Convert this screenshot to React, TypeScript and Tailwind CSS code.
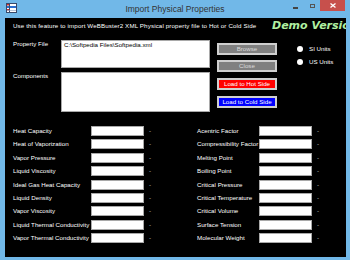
import React from "react";

const leftRows = [
  "Heat Capacity",
  "Heat of Vaporization",
  "Vapor Pressure",
  "Liquid Viscosity",
  "Ideal Gas Heat Capacity",
  "Liquid Density",
  "Vapor Viscosity",
  "Liquid Thermal Conductivity",
  "Vapor Thermal Conductivity",
];
const rightRows = [
  "Acentric Factor",
  "Compressibility Factor",
  "Melting Point",
  "Boiling Point",
  "Critical Pressure",
  "Critical Temperature",
  "Critical Volume",
  "Surface Tension",
  "Molecular Weight",
];

function PropRow({ label, labelW }: { label: string; labelW: string }) {
  return (
    <div className="flex h-[13.4px] items-start">
      <div className={`${labelW} shrink-0 leading-[10px] text-white whitespace-nowrap`}>{label}</div>
      <div className="w-[53px] h-[10px] shrink-0 bg-white border border-[#a9a9a9]" />
      <div className="ml-[5px] leading-[10px] text-[#d0d0d0]">-</div>
    </div>
  );
}

function Btn({ label, cls }: { label: string; cls: string }) {
  return (
    <div
      className={`w-[60px] h-[12px] border-2 border-[#cfcfcf] flex items-center justify-center leading-[8px] whitespace-nowrap ${cls}`}
    >
      {label}
    </div>
  );
}

export default function App() {
  return (
    <div
      className="w-[350px] h-[260px] bg-[#71b8e8] flex flex-col overflow-hidden"
      style={{ fontFamily: '"Liberation Sans", Arial, sans-serif' }}
    >
      {/* Title bar */}
      <div className="h-[18px] shrink-0 grid grid-cols-[1fr_auto_1fr]">
        <div className="pl-[6px] pt-[3px]">
          <svg width="11" height="10" viewBox="0 0 11 10">
            <rect x="0.5" y="0.5" width="10" height="9" fill="#ffffff" stroke="#3a4a6a" />
            <rect x="1" y="3" width="9" height="2" fill="#2d6fd0" />
            <line x1="3.5" y1="1" x2="3.5" y2="9" stroke="#3a4a6a" />
            <rect x="1" y="1" width="2" height="1.5" fill="#d03030" />
            <rect x="1" y="6" width="2" height="1.5" fill="#d03030" />
            <line x1="1" y1="7.5" x2="10" y2="7.5" stroke="#8aa0c0" strokeWidth="0.6" />
          </svg>
        </div>
        <div className="text-[8.5px] leading-[18px] text-[#333333] whitespace-nowrap">
          Import Physical Properties
        </div>
        <div className="flex justify-end items-start pr-[5px]">
          <div className="w-[17px] h-[11px] flex items-start justify-center pt-[7px]">
            <div className="w-[5px] h-[1.5px] bg-[#444]" />
          </div>
          <div className="w-[16px] h-[11px] flex items-start justify-center pt-[4px]">
            <div className="w-[5px] h-[4px] border border-[#555]" />
          </div>
          <div className="w-[25px] h-[11px] bg-[#c7504c] flex items-center justify-center">
            <svg width="6" height="5" viewBox="0 0 6 5">
              <line x1="0.5" y1="0.5" x2="5.5" y2="4.5" stroke="#fff" strokeWidth="1.3" />
              <line x1="5.5" y1="0.5" x2="0.5" y2="4.5" stroke="#fff" strokeWidth="1.3" />
            </svg>
          </div>
        </div>
      </div>

      {/* Client area */}
      <div className="ml-[5px] mr-[4px] h-[239px] shrink-0 bg-black overflow-hidden pl-[8px] pt-[3px] flex flex-col text-[6.2px]">
        {/* description row */}
        <div className="flex h-[10px] items-start">
          <div className="w-[259px] shrink-0 leading-[10px] text-white whitespace-nowrap tracking-[0.13px]">
            Use this feature to import WeBBuster2 XML Physical property file to Hot or Cold Side
          </div>
          <div
            className="shrink-0 -mt-[1px] whitespace-nowrap text-[11px] leading-[12px] font-bold italic text-[#b0f0a0]"
            style={{ fontFamily: '"DejaVu Sans", Verdana, sans-serif' }}
          >
            Demo Version
          </div>
        </div>

        {/* top form */}
        <div className="mt-[9px] flex items-start">
          <div className="w-[48px] shrink-0 flex flex-col text-white">
            <div className="h-[32px] leading-[8px] whitespace-nowrap">Property File</div>
            <div className="leading-[8px]">Components</div>
          </div>
          <div className="w-[149px] shrink-0 flex flex-col gap-[4px]">
            <div className="h-[28px] bg-white border border-[#a9a9a9] pl-[2px] leading-[8px] text-black whitespace-nowrap">
              C:\Softpedia Files\Softpedia.xml
            </div>
            <div className="h-[40px] bg-white border border-[#a9a9a9]" />
          </div>
          <div className="ml-[7px] shrink-0 pt-[3px] flex flex-col">
            <Btn label="Browse" cls="bg-[#808080] text-[#dcdcdc]" />
            <div className="mt-[5px]">
              <Btn label="Close" cls="bg-[#808080] text-[#dcdcdc]" />
            </div>
            <div className="mt-[6px]">
              <Btn label="Load to Hot Side" cls="bg-[#ff0000] text-white" />
            </div>
            <div className="mt-[6px]">
              <Btn label="Load to Cold Side" cls="bg-[#0000ff] text-white" />
            </div>
          </div>
          <div className="ml-[20px] shrink-0 pt-[5px] flex flex-col gap-[5px] text-white">
            <div className="flex items-center h-[8px] gap-[6px]">
              <div className="w-[6px] h-[6px] rounded-full bg-white" />
              <span className="leading-[8px] whitespace-nowrap">SI Units</span>
            </div>
            <div className="flex items-center h-[8px] gap-[6px]">
              <div className="w-[6px] h-[6px] rounded-full bg-white" />
              <span className="leading-[8px] whitespace-nowrap">US Units</span>
            </div>
          </div>
        </div>

        {/* property grid */}
        <div className="mt-[14px] flex">
          <div className="w-[184px] shrink-0 flex flex-col">
            {leftRows.map((r) => (
              <PropRow key={r} label={r} labelW="w-[78px]" />
            ))}
          </div>
          <div className="flex flex-col">
            {rightRows.map((r) => (
              <PropRow key={r} label={r} labelW="w-[62px]" />
            ))}
          </div>
        </div>
      </div>
    </div>
  );
}
